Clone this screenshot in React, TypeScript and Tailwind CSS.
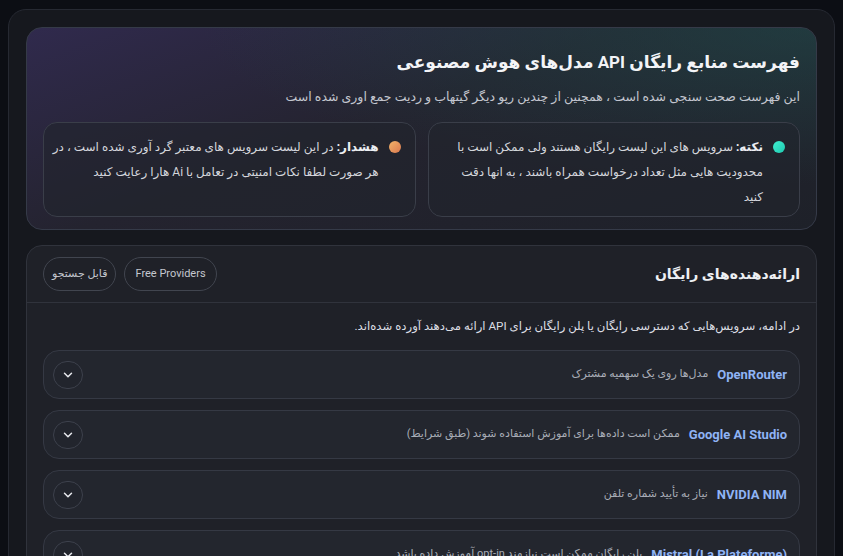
import React from 'react';
import { ChevronDown } from 'lucide-react';

const providers = [
  { name: 'OpenRouter', desc: 'مدل‌ها روی یک سهمیه مشترک' },
  { name: 'Google AI Studio', desc: 'ممکن است داده‌ها برای آموزش استفاده شوند (طبق شرایط)' },
  { name: 'NVIDIA NIM', desc: 'نیاز به تأیید شماره تلفن' },
  { name: 'Mistral (La Plateforme)', desc: 'پلن رایگان ممکن است نیازمند opt-in آموزش داده باشد' },
];

export default function App() {
  return (
    <div
      dir="rtl"
      className="h-[556px] overflow-hidden bg-[#0c0e14] px-2 pt-[9px] text-[#e6e8ee]"
      style={{ fontFamily: 'Roboto, "DejaVu Sans", sans-serif' }}
    >
      <div className="rounded-[18px] border border-[#262932] bg-[#16181e] p-[17px] pb-0 h-[600px]">
        {/* Hero */}
        <div className="rounded-[16px] border border-[#353a48] bg-[linear-gradient(160deg,#302a4d_0%,#24232f_45%,#1e2129_100%)] relative overflow-hidden">
          <div className="absolute inset-0 bg-[radial-gradient(ellipse_at_top_right,rgba(32,74,74,0.6),transparent_55%)]" />
          <div className="relative px-4 pt-[20px] pb-[12px]">
            <h1 className="text-[17px] font-bold leading-[28px] text-[#f3f4f7]">
              فهرست منابع رایگان API مدل‌های هوش مصنوعی
            </h1>
            <p className="mt-[11px] text-[12.5px] leading-[20px] text-[#c3c6cf]">
              این فهرست صحت سنجی شده است ، همچنین از چندین رپو دیگر گیتهاب و ردیت جمع اوری شده است
            </p>
            <div className="mt-[15px] grid grid-cols-2 gap-3">
              <div className="flex h-[95px] gap-[10px] rounded-[14px] border border-[#3a3e49] bg-[#22252d]/60 pr-[14px] pl-[15px] pt-[12px]">
                <span className="mt-[6px] h-[12px] w-[12px] shrink-0 rounded-full bg-[linear-gradient(135deg,#3ff0d0,#1fc9b0)]" />
                <p className="text-[12px] leading-[25px] text-[#d4d6dc]">
                  <b className="font-bold text-[#eceef2]">نکته:</b> سرویس های این لیست رایگان هستند ولی ممکن است با محدودیت هایی مثل تعداد درخواست همراه باشند ، به انها دقت کنید
                </p>
              </div>
              <div className="flex h-[95px] gap-[10px] rounded-[14px] border border-[#3a3e49] bg-[#22252d]/60 pr-[14px] pl-[4px] pt-[12px]">
                <span className="mt-[6px] h-[12px] w-[12px] shrink-0 rounded-full bg-[linear-gradient(135deg,#f2b46a,#d9784f)]" />
                <p className="text-[12px] leading-[25px] text-[#d4d6dc]">
                  <b className="font-bold text-[#eceef2]">هشدار:</b> در این لیست سرویس های معتبر گرد آوری شده است ، در هر صورت لطفا نکات امنیتی در تعامل با Ai هارا رعایت کنید
                </p>
              </div>
            </div>
          </div>
        </div>

        {/* Providers section */}
        <div className="mt-[15px] rounded-[16px] border border-[#30333c] bg-[#1f2128]">
          <div className="flex h-[57px] items-center justify-between border-b border-[#30333c] px-4">
            <h2 className="text-[14px] font-bold text-[#eef0f4]">ارائه‌دهنده‌های رایگان</h2>
            <div className="flex gap-2">
              <span className="flex h-[34px] items-center rounded-full border border-[#41454f] px-[10px] text-[11px] text-[#c4c7cf]">
                Free Providers
              </span>
              <span className="flex h-[34px] items-center rounded-full border border-[#41454f] px-[8px] text-[11px] text-[#c4c7cf]">
                قابل جستجو
              </span>
            </div>
          </div>
          <div className="px-4 pt-[13px]">
            <p className="text-[11.7px] leading-[20px] text-[#dcdee4]">
              در ادامه، سرویس‌هایی که دسترسی رایگان یا پلن رایگان برای API ارائه می‌دهند آورده شده‌اند.
            </p>
            <div className="mt-[14px] flex flex-col gap-[11px]">
              {providers.map((p) => (
                <div
                  key={p.name}
                  className="flex h-[49px] items-center justify-between rounded-[16px] border border-[#353944] bg-[#23262e] pr-[12px] pl-[9px]"
                >
                  <div className="flex items-center gap-[9px]">
                    <span dir="ltr" className="text-[13px] font-bold text-[#8fb3f5]">{p.name}</span>
                    <span className="text-[11px] text-[#a9adb7]">{p.desc}</span>
                  </div>
                  <span className="flex h-[28px] w-[30px] items-center justify-center rounded-full border border-[#3d414c] bg-[#22252d] text-[#e8eaee]">
                    <ChevronDown size={14} strokeWidth={2.5} />
                  </span>
                </div>
              ))}
            </div>
          </div>
        </div>
      </div>
    </div>
  );
}
